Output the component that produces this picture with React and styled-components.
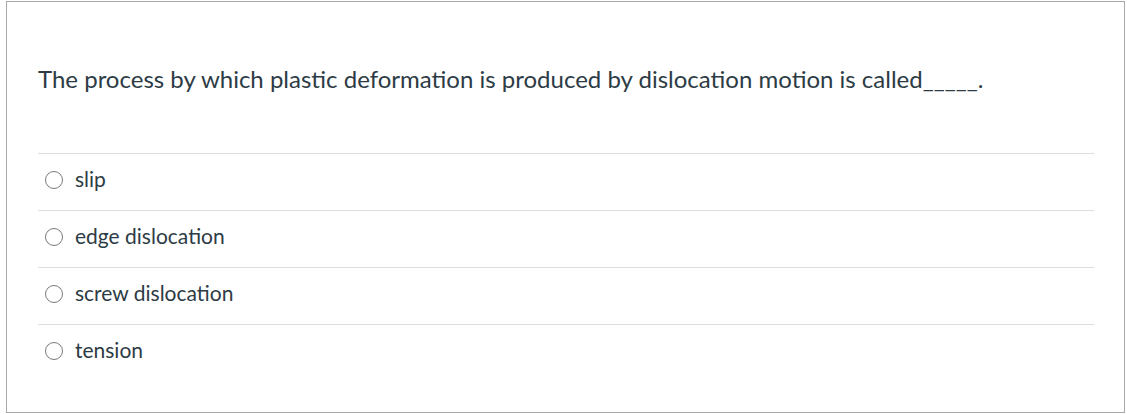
import styled, { createGlobalStyle } from 'styled-components';

const GlobalStyle = createGlobalStyle`
  html, body {
    margin: 0;
    padding: 0;
    background: #ffffff;
  }
  body {
    font-family: Lato, "Liberation Sans", sans-serif;
    color: #2d3b45;
  }
`;

const options = ['slip', 'edge dislocation', 'screw dislocation', 'tension'];

const App = () => {
  return (
    <>
      <GlobalStyle />
      <Page>
        <QuestionBox>
          <QuestionText>
            The process by which plastic deformation is produced by dislocation motion is called_____.
          </QuestionText>
          <AnswerList>
            {options.map((item, idx) => (
              <AnswerRow key={idx}>
                <Radio type='radio' name='answer' />
                <AnswerLabel>{item}</AnswerLabel>
              </AnswerRow>
            ))}
          </AnswerList>
        </QuestionBox>
      </Page>
    </>
  );
};

const Page = styled.div`
  padding: 1px 0 0 6px;
`;

const QuestionBox = styled.div`
  box-sizing: border-box;
  width: 1119px;
  height: 412px;
  border: 1px solid #a9a9a9;
  padding: 0 30px 0 31px;
`;

const QuestionText = styled.div`
  font-size: 24px;
  line-height: 30px;
  padding-top: 62px;
  height: 151px;
  box-sizing: border-box;
  color: #2d3b45;
`;

const AnswerList = styled.div`
  display: flex;
  flex-direction: column;
`;

const AnswerRow = styled.label`
  display: flex;
  align-items: center;
  height: 57px;
  box-sizing: border-box;
  border-top: 1px solid #dddddd;
  padding-left: 7px;
  padding-bottom: 7px;
`;

const Radio = styled.input`
  appearance: none;
  box-sizing: border-box;
  width: 18px;
  height: 18px;
  margin: 3px 12px 0 0;
  border: 1px solid #7a7a7a;
  border-radius: 50%;
  background: #fff;
`;

const AnswerLabel = styled.span`
  font-size: 21px;
  line-height: 26px;
  color: #2d3b45;
`;

export default App;
